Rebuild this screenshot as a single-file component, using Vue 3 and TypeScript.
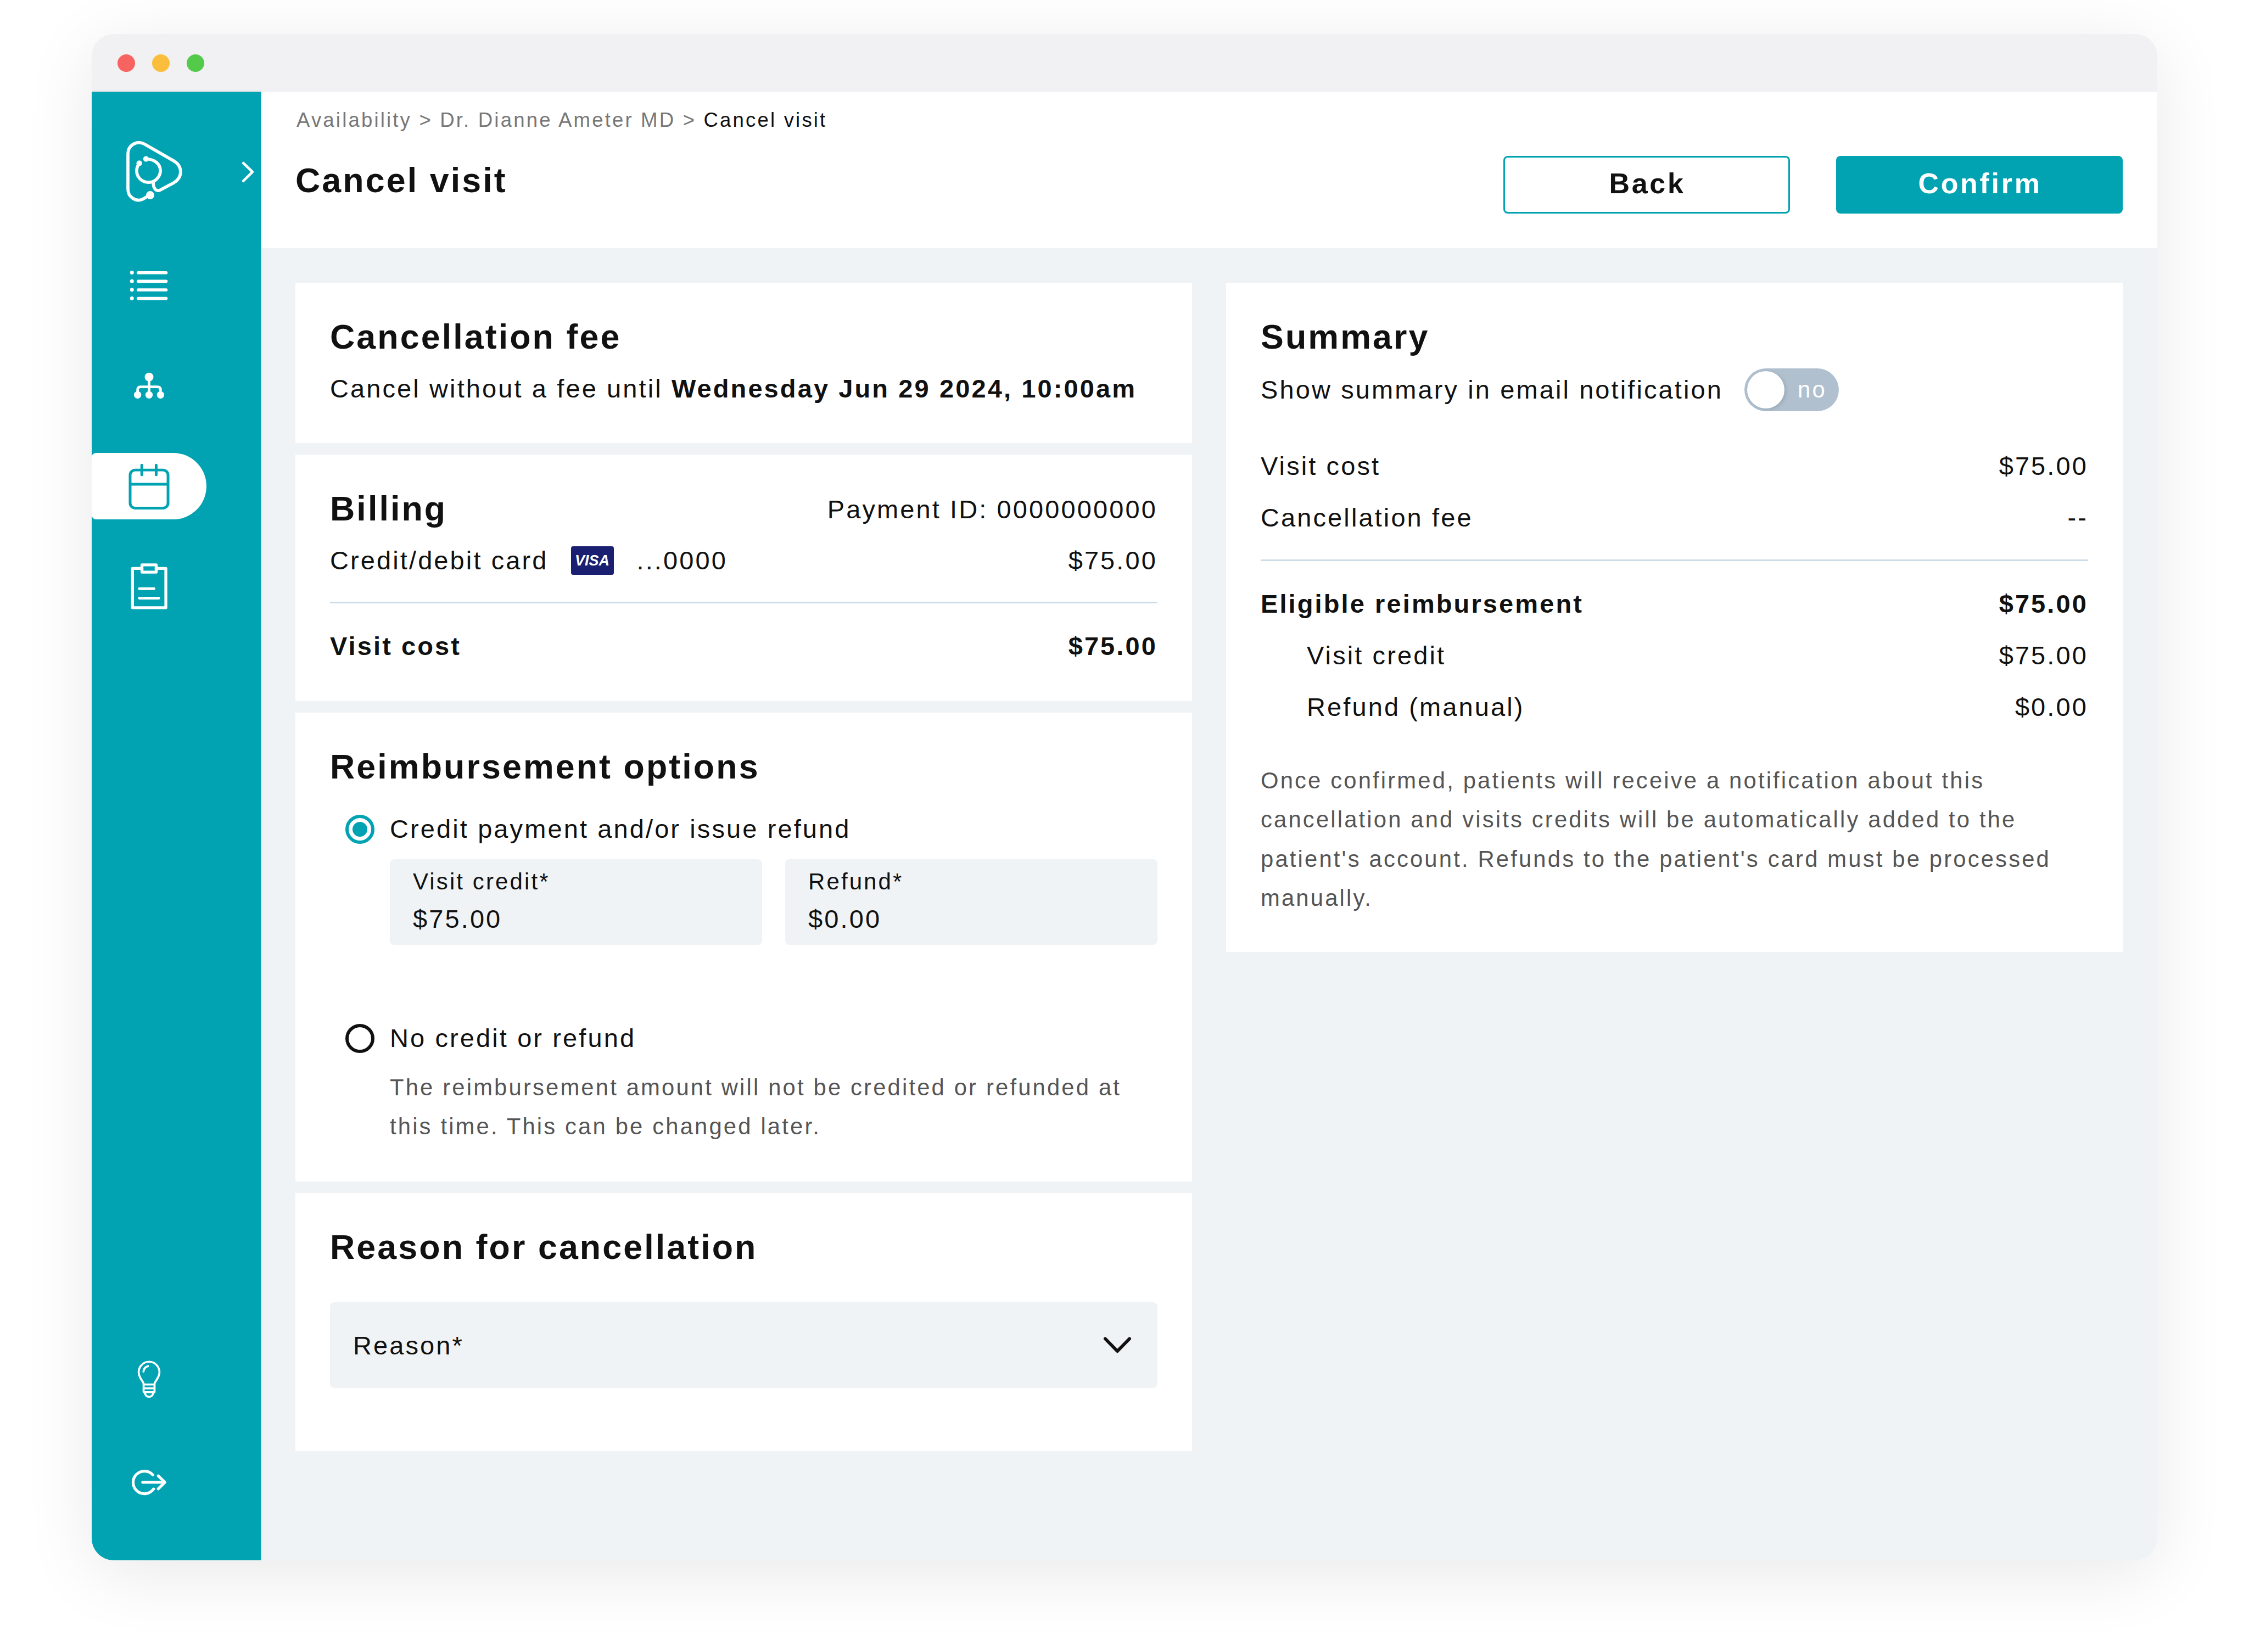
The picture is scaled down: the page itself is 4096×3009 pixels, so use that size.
<script setup lang="ts">
const summaryRows: { label: string; value: string }[] = [
  { label: 'Visit cost', value: '$75.00' },
  { label: 'Cancellation fee', value: '--' },
]
</script>

<template>
  <div class="page">
    <div class="window">
      <div class="titlebar">
        <span class="dot red"></span>
        <span class="dot yellow"></span>
        <span class="dot green"></span>
      </div>
      <div class="body">
        <aside class="sidebar">
          <div class="logo-row">
            <svg class="logo" viewBox="270 652 307 333" fill="none" stroke="#fff" stroke-width="17" stroke-linecap="round">
              <path d="M385 955 L362 969 C325 988 279 960 279 915 L279 722 C279 675 325 645 370 668 L530 760 C580 790 580 850 530 880 L455 920 C435 930 418 912 418 880" />
              <path d="M340 775 C322 800 322 835 345 858 C370 884 415 884 438 858 C465 830 462 790 435 768 C420 755 400 750 380 750" />
              <circle cx="341" cy="773" r="7" fill="#fff" />
              <circle cx="378" cy="749" r="7" fill="#fff" />
              <circle cx="401" cy="948" r="14" fill="#fff" />
            </svg>
            <svg class="chev" viewBox="895 760 80 120" fill="none" stroke="#fff" stroke-width="14" stroke-linecap="round" stroke-linejoin="round">
              <path d="M910 772 L960 820 L910 870" />
            </svg>
          </div>
          <nav class="nav">
            <div class="item">
              <svg class="i-list" viewBox="60 50 250 200" fill="#fff">
                <g><circle cx="91" cy="78" r="10.5" /><circle cx="91" cy="125" r="10.5" /><circle cx="91" cy="172" r="10.5" /><circle cx="91" cy="219" r="10.5" /></g>
                <rect x="117" y="70" width="170" height="17" rx="8.5" />
                <rect x="117" y="117" width="170" height="17" rx="8.5" />
                <rect x="117" y="164" width="170" height="17" rx="8.5" />
                <rect x="117" y="211" width="170" height="17" rx="8.5" />
              </svg>
            </div>
            <div class="item">
              <svg class="i-org" viewBox="60 610 250 180" fill="#fff">
                <circle cx="185" cy="651" r="24" />
                <circle cx="122" cy="749" r="20" />
                <circle cx="185" cy="749" r="20" />
                <circle cx="248" cy="749" r="20" />
                <path d="M185 670 V749 M122 745 V722 Q122 705 139 705 H231 Q248 705 248 722 V745" fill="none" stroke="#fff" stroke-width="14" />
              </svg>
            </div>
            <div class="item active">
              <svg class="i-cal" viewBox="270 120 250 270" fill="none" stroke="#01a3b3" stroke-width="15" stroke-linecap="round">
                <rect x="291" y="165" width="208" height="209" rx="28" />
                <path d="M291 243 H499" stroke-linecap="butt" />
                <path d="M355 138 V192 M434 138 V192" />
              </svg>
            </div>
            <div class="item">
              <svg class="i-clip" viewBox="270 670 250 270" fill="none" stroke="#fff" stroke-width="16" stroke-linejoin="round" stroke-linecap="round">
                <path d="M356 707 H304 V922 H487 V707 H434" />
                <rect x="356" y="687" width="78" height="40" />
                <path d="M342 818 H422 M342 870 H448" stroke-width="15" />
              </svg>
            </div>
          </nav>
          <div class="nav-bottom">
            <div class="item">
              <svg class="i-bulb" viewBox="270 160 250 230" fill="none" stroke="#fff" stroke-width="11" stroke-linecap="round" stroke-linejoin="round">
                <path d="M365 345 V300 C365 285 338 268 338 236 A57 58 0 1 1 452 236 C452 268 425 285 425 300 V345 Z" />
                <path d="M365 303 H425 M365 324 H425" />
                <path d="M372 348 C376 378 414 378 418 348" />
                <path d="M364 232 C366 216 375 206 390 202" />
              </svg>
            </div>
            <div class="item">
              <svg class="i-out" viewBox="270 760 250 155" fill="none" stroke="#fff" stroke-width="15.5" stroke-linecap="round" stroke-linejoin="round">
                <path d="M416 797 A62 62 0 1 0 420 874" />
                <path d="M360 837 H478" />
                <path d="M445 802 L482 837 L445 873" />
              </svg>
            </div>
          </div>
        </aside>

        <div class="content">
          <header class="header">
            <div class="header-text">
              <div class="crumbs">Availability &gt; Dr. Dianne Ameter MD &gt; <span class="crumb-current">Cancel visit</span></div>
              <h1 class="title">Cancel visit</h1>
            </div>
            <div class="actions">
              <button class="btn ghost">Back</button>
              <button class="btn solid">Confirm</button>
            </div>
          </header>

          <main class="main">
            <div class="col">
              <section class="card fee">
                <h2>Cancellation fee</h2>
                <p class="line">Cancel without a fee until <b>Wednesday Jun 29 2024, 10:00am</b></p>
              </section>

              <section class="card billing">
                <div class="between head-row">
                  <h2>Billing</h2>
                  <span class="line">Payment ID: 0000000000</span>
                </div>
                <div class="between line">
                  <span class="card-info">
                    <span>Credit/debit card</span>
                    <span class="visa">VISA</span>
                    <span>...0000</span>
                  </span>
                  <span>$75.00</span>
                </div>
                <div class="rule"></div>
                <div class="between line strong">
                  <span>Visit cost</span>
                  <span>$75.00</span>
                </div>
              </section>

              <section class="card reimburse">
                <h2>Reimbursement options</h2>
                <label class="radio-row first">
                  <span class="radio on"></span>
                  <span>Credit payment and/or issue refund</span>
                </label>
                <div class="fields">
                  <div class="field">
                    <div class="field-label">Visit credit*</div>
                    <div class="field-value">$75.00</div>
                  </div>
                  <div class="field">
                    <div class="field-label">Refund*</div>
                    <div class="field-value">$0.00</div>
                  </div>
                </div>
                <label class="radio-row second">
                  <span class="radio"></span>
                  <span>No credit or refund</span>
                </label>
                <p class="note indent">The reimbursement amount will not be credited or refunded at this time. This can be changed later.</p>
              </section>

              <section class="card reason">
                <h2>Reason for cancellation</h2>
                <div class="select">
                  <span>Reason*</span>
                  <svg class="select-chev" viewBox="0 0 54 34" fill="none" stroke="#111" stroke-width="6" stroke-linecap="round" stroke-linejoin="round">
                    <path d="M5 5.500 L27 28 L49 5.500" />
                  </svg>
                </div>
              </section>
            </div>

            <div class="col">
              <section class="card summary">
                <h2>Summary</h2>
                <div class="toggle-row">
                  <span class="line">Show summary in email notification</span>
                  <span class="toggle">
                    <span class="knob"></span>
                    <span class="toggle-text">no</span>
                  </span>
                </div>
                <div class="rows first-rows">
                  <div v-for="r in summaryRows" :key="r.label" class="between line">
                    <span>{{ r.label }}</span>
                    <span>{{ r.value }}</span>
                  </div>
                </div>
                <div class="rule"></div>
                <div class="rows">
                  <div class="between line strong">
                    <span>Eligible reimbursement</span>
                    <span>$75.00</span>
                  </div>
                  <div class="between line sub">
                    <span>Visit credit</span>
                    <span>$75.00</span>
                  </div>
                  <div class="between line sub">
                    <span>Refund (manual)</span>
                    <span>$0.00</span>
                  </div>
                </div>
                <p class="note para">Once confirmed, patients will receive a notification about this cancellation and visits credits will be automatically added to the patient's account. Refunds to the patient's card must be processed manually.</p>
              </section>
            </div>
          </main>
        </div>
      </div>
    </div>
  </div>
</template>

<style>
html, body { margin: 0; background: #fff; }
</style>

<style scoped>
* { box-sizing: border-box; }
.page {
  width: 4096px;
  height: 3009px;
  padding: 62px 167px 0;
  overflow: hidden;
  font-family: "Liberation Sans", Arial, sans-serif;
  font-size: 47px;
  letter-spacing: 3.1px;
  color: #111;
}
.window {
  width: 3762px;
  height: 2780px;
  border-radius: 40px;
  overflow: hidden;
  display: flex;
  flex-direction: column;
  box-shadow: 0 24px 130px rgba(0, 0, 0, 0.09);
}
.titlebar {
  height: 105px;
  flex: none;
  background: #f1f1f3;
  display: flex;
  align-items: center;
  gap: 31px;
  padding: 0 0 0 47px;
}
.dot { width: 32px; height: 32px; border-radius: 50%; }
.red { background: #f66360; }
.yellow { background: #fabd3c; }
.green { background: #53ca49; }
.body { flex: 1; display: flex; min-height: 0; }

.sidebar {
  width: 308px;
  flex: none;
  background: #01a3b3;
  display: flex;
  flex-direction: column;
  position: relative;
  z-index: 1;
  box-shadow: 1px 0 4px rgba(0, 0, 0, 0.12);
  padding-bottom: 82px;
}
.logo-row {
  display: flex;
  align-items: center;
  justify-content: space-between;
  padding: 90px 10px 0 63px;
  margin-bottom: 92px;
}
.logo { width: 102px; height: 111px; }
.chev { width: 27px; height: 40px; }
.nav { display: flex; flex-direction: column; gap: 61.5px; }
.nav-bottom { margin-top: auto; display: flex; flex-direction: column; gap: 66px; }
.item {
  width: 209px;
  height: 121px;
  display: flex;
  align-items: center;
  justify-content: center;
}
.item.active { background: #fff; border-radius: 8px 60.500px 60.500px 8px; }
.i-list { width: 83px; height: 67px; }
.i-org { width: 83px; height: 60px; }
.i-cal, .i-clip { width: 83px; height: 90px; }
.i-bulb { width: 83px; height: 77px; }
.i-out { width: 83px; height: 52px; }

.content { flex: 1; display: flex; flex-direction: column; min-width: 0; background: #eff3f6; }
.header {
  height: 285px;
  flex: none;
  background: #fff;
  padding: 0 63px;
  display: flex;
  justify-content: space-between;
}
.crumbs {
  margin: 27px 0 0 2px;
  height: 50px;
  line-height: 50px;
  font-size: 36.600px;
  letter-spacing: 3.160px;
  color: #777;
}
.crumb-current { color: #111; }
.title {
  margin: 46px 0 0;
  font-size: 62.700px;
  line-height: 76px;
  font-weight: 700;
}
.actions { display: flex; gap: 84px; padding-top: 117px; }
.btn {
  width: 522px;
  height: 105px;
  border-radius: 8px;
  font: 700 52px "Liberation Sans", Arial, sans-serif;
  letter-spacing: 3.700px;
  padding: 0 0 5px 2px;
}
.ghost { background: #fff; border: 3px solid #01a3b3; color: #111; }
.solid { background: #01a3b3; border: 0; color: #fff; }

.main { flex: 1; padding: 63px; display: grid; grid-template-columns: 1633px 1633px; gap: 62px; align-items: start; }
.col { display: flex; flex-direction: column; gap: 21px; }
.card { background: #fff; padding: 62px 63px 0; }
h2 { margin: 0; padding-bottom: 4px; font-size: 62.700px; line-height: 72px; font-weight: 700; }
.line { line-height: 60px; margin: 0; }
.between { display: flex; justify-content: space-between; align-items: center; }
.strong { font-weight: 700; }
.rule { height: 3px; background: #cbdce6; }

.fee { height: 292px; }
.fee .line { margin-top: 25px; }

.billing { height: 449px; }
.head-row { margin-bottom: 25px; }
.card-info { display: flex; align-items: center; }
.visa {
  width: 78px;
  height: 52px;
  margin: 0 42px 0 41px;
  background: #1a1f71;
  border-radius: 4px;
  color: #fff;
  font-size: 27px;
  font-weight: 700;
  font-style: italic;
  letter-spacing: 0;
  line-height: 52px;
  text-align: center;
}
.billing .rule { margin: 45px 0 48px; }

.reimburse { height: 854px; }
.radio-row { display: flex; align-items: center; height: 60px; line-height: 60px; padding-left: 28px; }
.radio-row.first { margin-top: 44px; }
.radio-row.second { margin-top: 140px; }
.radio {
  width: 53px;
  height: 53px;
  border-radius: 50%;
  border: 6px solid #111;
  margin-right: 28px;
  flex: none;
}
.radio.on {
  border-color: #01a3b3;
  background: radial-gradient(circle, #01a3b3 0 13px, #fff 14px);
}
.fields { display: flex; gap: 42px; margin: 25px 0 0 109px; }
.field {
  flex: 1;
  height: 156px;
  background: #eff3f6;
  border-radius: 8px;
  padding: 16px 42px 0;
}
.field-label { font-size: 42px; line-height: 50px; }
.field-value { line-height: 60px; margin-top: 13px; }
.note { margin: 0; font-size: 41.800px; line-height: 71.300px; letter-spacing: 3.150px; color: #555; }
.indent { margin: 24px 0 0 109px; }

.reason { height: 470px; }
.select {
  margin-top: 61px;
  height: 156px;
  background: #eff3f6;
  border-radius: 8px;
  padding: 0 46px 0 42px;
  display: flex;
  align-items: center;
  justify-content: space-between;
}
.select-chev { width: 54px; height: 34px; }

.summary { height: 1219px; }
.toggle-row { display: flex; align-items: center; gap: 39px; margin-top: 18px; }
.toggle {
  position: relative;
  width: 172px;
  height: 78px;
  border-radius: 39px;
  background: #b0c0cf;
  display: block;
  flex: none;
}
.knob {
  position: absolute;
  left: 5px;
  top: 5px;
  width: 68px;
  height: 68px;
  border-radius: 50%;
  background: #fff;
  box-shadow: 3px 2px 6px rgba(0, 0, 0, 0.12);
}
.toggle-text {
  position: absolute;
  left: 97px;
  top: 14px;
  color: #fff;
  font-size: 41.800px;
  line-height: 50px;
}
.rows { display: flex; flex-direction: column; gap: 34px; }
.first-rows { margin-top: 70px; }
.summary .rule { margin: 46px 0 48px; }
.sub { padding-left: 84px; }
.para { margin-top: 68px; }
</style>
